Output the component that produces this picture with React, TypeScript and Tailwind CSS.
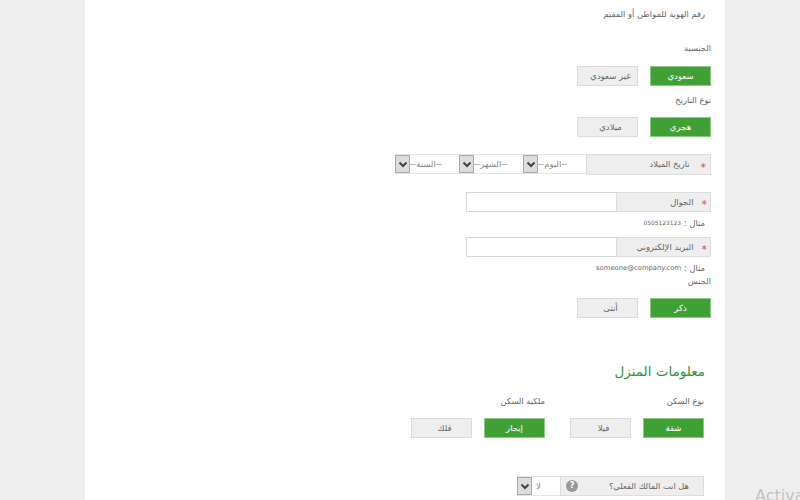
import React from "react";

const font = { fontFamily: '"DejaVu Sans", "Noto Sans", sans-serif' };

function Toggle({ label, active }: { label: string; active?: boolean }) {
  return (
    <div
      className={
        "w-[61px] h-[20px] flex items-center justify-center text-[8.5px] border " +
        (active
          ? "bg-[#41a035] border-[#8cc786] text-white"
          : "bg-[#eeeeee] border-[#dcdcdc] text-[#666666] pl-[6px]")
      }
    >
      {label}
    </div>
  );
}

function Caret() {
  return (
    <div className="w-[15px] h-full shrink-0 bg-[#dddddd] border border-[#a9a9a9] flex items-center justify-center">
      <svg width="10" height="7" viewBox="0 0 10 7" fill="none">
        <path d="M1.5 1.5 L5 5 L8.5 1.5" stroke="#444444" strokeWidth="2" />
      </svg>
    </div>
  );
}

function Select({ label, w, pad }: { label: string; w: string; pad?: string }) {
  return (
    <div className={w + " h-[20px] flex bg-white text-[8.5px] text-[#888888] border-y border-[#e4e4e4]"}>
      <div className={(pad ?? "") + " flex-1 flex items-center justify-end overflow-hidden whitespace-nowrap"}>{label}</div>
      <Caret />
    </div>
  );
}

function Star() {
  return <span className="text-[#d9436b] text-[11px] leading-none pt-[5px]">*</span>;
}

function InputRow({ label, top }: { label: string; top: string }) {
  return (
    <div className={top + " flex h-[20px] w-[245px]"}>
      <div className="w-[95px] bg-[#eeeeee] border border-[#dddddd] flex items-center pr-[3px] gap-[8px] text-[8.5px] text-[#666666]">
        <Star />
        <span>{label}</span>
      </div>
      <div className="w-[150px] bg-white border border-[#d6d6d6] border-r-0" />
    </div>
  );
}

export default function App() {
  return (
    <div className="relative h-[500px] w-[800px] overflow-hidden bg-[#eeeeee]" style={font}>
      <div dir="rtl" className="ml-[85px] w-[640px] h-[500px] bg-white pr-[14px] text-[#666666] text-[8.3px]">
        <div className="pt-[8px] pr-[6px] h-[12px] leading-[12px] box-content">رقم الهوية للمواطن أو المقيم</div>
        <div className="mt-[22px] h-[12px] leading-[12px]">الجنسية</div>
        <div className="mt-[12px] flex gap-[12px]">
          <Toggle label="سعودي" active />
          <Toggle label="غير سعودي" />
        </div>
        <div className="mt-[8px] h-[12px] leading-[12px]">نوع التاريخ</div>
        <div className="mt-[11px] flex gap-[12px]">
          <Toggle label="هجري" active />
          <Toggle label="ميلادي" />
        </div>
        <div className="mt-[17px] flex h-[21px]">
          <div className="w-[125px] bg-[#eeeeee] border border-[#dddddd] flex items-center pr-[4px] gap-[11px]">
            <Star />
            <span>تاريخ الميلاد</span>
          </div>
          <Select label="--اليوم--" w="w-[63px]" />
          <Select label="--الشهر--" w="w-[64px]" />
          <Select label="--السنة--" w="w-[64px]" />
        </div>
        <InputRow label="الجوال" top="mt-[17px]" />
        <div className="mt-[5px] pr-[6px] h-[12px] leading-[12px] flex items-center gap-[3px]">
          <span>مثال :</span>
          <span className="text-[5.9px]">0505123123</span>
        </div>
        <InputRow label="البريد الإلكتروني" top="mt-[8px]" />
        <div className="mt-[5px] pr-[6px] h-[12px] leading-[12px] flex items-center gap-[3px]">
          <span>مثال :</span>
          <span className="text-[6.8px]">someone@company.com</span>
        </div>
        <div className="mt-[1px] h-[12px] leading-[12px]">الجنس</div>
        <div className="mt-[11px] flex gap-[12px]">
          <Toggle label="ذكر" active />
          <Toggle label="أنثى" />
        </div>
        <h2 className="mt-[41px] pr-[6px] h-[24px] leading-[24px] text-[13.5px] text-[#3a8f3f] font-normal">معلومات المنزل</h2>
        <div className="mt-[12px] pr-[7px] h-[12px] leading-[12px] flex">
          <div className="w-[159px]">نوع السكن</div>
          <div>ملكية السكن</div>
        </div>
        <div className="mt-[11px] pr-[7px] flex">
          <Toggle label="شقة" active />
          <div className="w-[12px]" />
          <Toggle label="فيلا" />
          <div className="w-[25px]" />
          <Toggle label="إيجار" active />
          <div className="w-[12px]" />
          <Toggle label="قلك" />
        </div>
        <div className="mt-[38px] mr-[7px] flex h-[20px] w-[187px]">
          <div className="w-[144px] bg-[#eeeeee] border border-[#dddddd] flex items-center justify-between pr-[14px] pl-[5px]">
            <span>هل انت المالك الفعلي؟</span>
            <span className="w-[12px] h-[12px] rounded-full bg-[#999999] text-white text-[8px] font-bold flex items-center justify-center">?</span>
          </div>
          <Select label="لا" w="w-[43px]" pad="pl-[4px]" />
        </div>
      </div>
      <div className="absolute left-[755px] top-[486px] text-[16px] leading-[20px] text-[#c4c4c4] whitespace-nowrap">Activate Windows</div>
    </div>
  );
}
